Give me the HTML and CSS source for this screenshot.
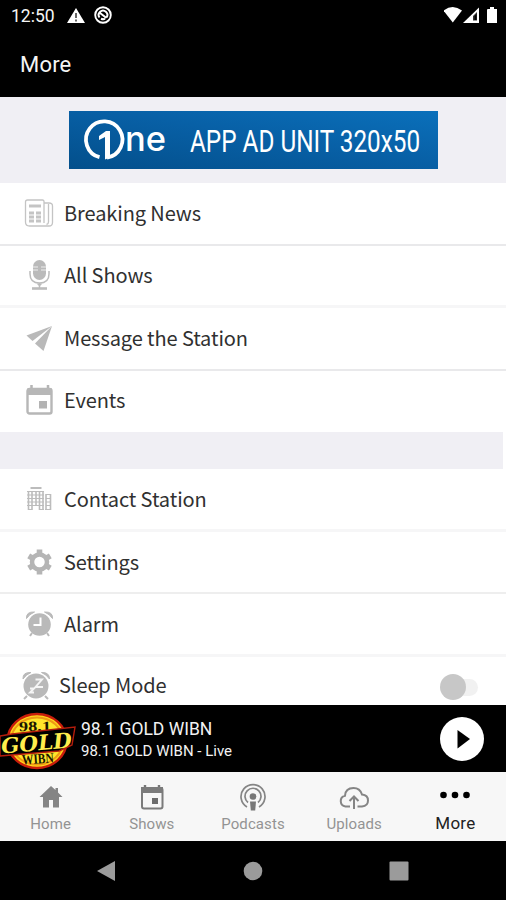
FILE: index.html
```html
<!DOCTYPE html>
<html lang="en">
<head>
    <meta charset="UTF-8">
    <meta name="viewport" content="width=device-width, initial-scale=1.0">
    <title>More</title>
    <link rel="stylesheet" href="styles.css">
</head>
<body>
    <div class="status-bar">
        <span class="clock">12:50</span>
        <svg class="warn" width="18" height="16" viewBox="0 0 18 16">
            <path d="M9 0L18 15H0z" fill="#fff"/>
            <path d="M9 5v5M9 11.5v2" stroke="#666" stroke-width="2"/>
        </svg>
        <svg class="dnd" width="18" height="18" viewBox="0 0 18 18" fill="none" stroke="#fff">
            <circle cx="9" cy="9" r="7.8" stroke-width="1.9"/>
            <path d="M5.5 11.5A4.3 4.3 0 1 1 12.5 11.5M6 7l6.500 5M7 12.7q2.5 1 4 0" stroke-width="2"/>
        </svg>
        <svg class="signals" width="56" height="18" viewBox="0 0 56 18">
            <path d="M-.5 4.500Q8.800-2.500 18 4.500L8.800 16.500z" fill="#fff"/>
            <path d="M35 1.500V17H19z" fill="#fff"/>
            <path d="M33 6v8.500h-4V10z" fill="#333"/>
            <path d="M32.500 8v6h-2v-4z" fill="#000"/>
            <path d="M43.500 3h2.500V1h4v2h3v14h-10V4z" fill="#fff"/>
        </svg>
    </div>
    <header class="app-header">More</header>

    <div class="ad-wrap">
        <svg class="ad" width="369" height="58" viewBox="0 0 369 58">
            <defs>
                <linearGradient id="adFill" x1="0" y1="1" x2="1" y2="0">
                    <stop offset="0" stop-color="#034f8b"/>
                    <stop offset=".55" stop-color="#0860a6"/>
                    <stop offset="1" stop-color="#0a70bb"/>
                </linearGradient>
            </defs>
            <rect width="369" height="58" fill="url(#adFill)"/>
            <path d="M30.500 46.200A18.200 18.200 0 1 1 38 46.600" fill="none" stroke="#fff" stroke-width="3.800"/>
            <path d="M30 29v-4l7-5H41v26.500l-5 2V26z" fill="#fff"/>
            <text x="56" y="39.500" class="ad-brand" textLength="41" lengthAdjust="spacingAndGlyphs">ne</text>
            <g transform="translate(121 0) scale(.84 1)">
                <text x="0" y="41" class="ad-text" textLength="274" lengthAdjust="spacingAndGlyphs">APP AD UNIT 320x50</text>
            </g>
        </svg>
    </div>

    <main class="menu">
        <div class="row line">
            <svg width="30" height="30" viewBox="0 0 30 30" fill="none" stroke="#c4c4c4" stroke-width="1.300">
                <path d="M20 25V3.500Q20 2 18.500 2H3.500Q1.500 2 1.500 4v20q0 4 4 4H25q3.500 0 3.500-3.500V8Q28.500 5 25 5h-5M24.500 6v18q0 2-2 2.500"/>
                <path d="M5 8h12" stroke-width="3"/>
                <path d="M5 15h5M12 15h5M5 19h5M12 19h5M5 23h5M12 23h5" stroke-width="2.800"/>
            </svg>
            <span>Breaking News</span>
        </div>
        <div class="row soft">
            <svg width="30" height="30" viewBox="0 0 30 30">
                <rect x="9" y="0" width="13" height="20" rx="6.500" fill="#bababa"/>
                <path d="M9 7h5M17 7h5M9 10h5M17 10h5" stroke="#eee" stroke-width="1.100"/>
                <path d="M6 11v3q0 9 9.500 9t9.500-9v-3M15.500 23v5" fill="none" stroke="#bcbcbc" stroke-width="1.500"/>
                <path d="M12.500 23.500h6l-3 3z" fill="#bcbcbc"/>
                <path d="M8 28.500h15" stroke="#bcbcbc" stroke-width="2.600"/>
            </svg>
            <span>All Shows</span>
        </div>
        <div class="row line">
            <svg width="30" height="30" viewBox="0 0 30 30" fill="#b9b9b9">
                <path d="M2.500 12.500L28 3 8.500 18z"/>
                <path d="M28 3L19.500 28 11 20.500z"/>
            </svg>
            <span>Message the Station</span>
        </div>
        <div class="row last">
            <svg width="30" height="30" viewBox="0 0 30 30">
                <path d="M7.500 0v5M24 0v5" stroke="#b5b5b5" stroke-width="2.500"/>
                <rect x="3.500" y="4" width="24" height="24.500" rx="2" fill="none" stroke="#b7b7b7" stroke-width="2.400"/>
                <path d="M3 3.500h25V10H3z" fill="#b7b7b7"/>
                <path d="M15 16h8v7.500h-8z" fill="#b3b3b3"/>
            </svg>
            <span>Events</span>
        </div>
        <div class="divider"></div>
        <div class="row soft">
            <svg width="30" height="30" viewBox="0 0 30 30" fill="none" stroke="#bcbcbc">
                <path d="M6.500 4h11" stroke-width="2"/>
                <path d="M3 7.500h17M3 11h17M3 14.500h17M3 18h17M3 21.500h17M4 25.500h4M15 25.500h5M22 10.500h5M22 14.500h5M22 18h5M22 21.500h5M21 25.500h6" stroke-width="1.200"/>
                <path d="M4.500 7v19M8 7v19M12 7v15M15.500 7v19M19 7v19M22 10v16M26.500 10v16" stroke-width="1.600"/>
            </svg>
            <span>Contact Station</span>
        </div>
        <div class="row line-soft">
            <svg width="30" height="30" viewBox="0 0 30 30">
                <circle cx="15.500" cy="15" r="7.500" fill="none" stroke="#b5b5b5" stroke-width="4.500"/>
                <path d="M15.500 2.500v4M15.500 23.500v4M4.700 8.800l3.400 2M22.900 19.200l3.400 2M4.700 21.200l3.400-2M22.900 10.800l3.400-2" stroke="#b5b5b5" stroke-width="5.600"/>
            </svg>
            <span>Settings</span>
        </div>
        <div class="row soft">
            <svg width="30" height="30" viewBox="0 0 30 30">
                <circle cx="15.500" cy="15.500" r="11.300" fill="#b9b9b9"/>
                <path d="M2.500 9.500Q2 2.500 10.500 3Q5.500 5 2.500 9.500M20.500 3q8.500-.5 8 6.500-3-4.500-8-6.500" fill="#b9b9b9" stroke="#b9b9b9" stroke-width="1"/>
                <path d="M8 24l-2 3M23 24l2 3" stroke="#b9b9b9" stroke-width="2"/>
                <path d="M16.500 8.500V16H9.500" fill="none" stroke="#fff" stroke-width="2"/>
            </svg>
            <span>Alarm</span>
        </div>
        <div class="row sleep">
            <svg width="30" height="30" viewBox="0 0 30 30">
                <circle cx="15" cy="16" r="12.500" fill="#b9b9b9"/>
                <path d="M2 9Q1.500 2 10 2.500Q5 4.500 2 9M20.500 2.500q8-.5 8 6.500-3-4.500-8-6.500" fill="#b9b9b9" stroke="#b9b9b9" stroke-width="1"/>
                <path d="M6 26l-3 3M24 26l3 3" stroke="#b9b9b9" stroke-width="2"/>
                <path d="M14.500 9.500h6.500l-6.500 7.500H22M9 18.500h4l-4 4h4" fill="none" stroke="#f5f5f5" stroke-width="1.900"/>
            </svg>
            <span>Sleep Mode</span>
            <div class="toggle"><i class="knob"></i></div>
        </div>
    </main>

    <div class="player">
        <svg class="logo" width="76" height="66" viewBox="0 0 76 66">
            <ellipse cx="37" cy="35" rx="29.500" ry="27" fill="#ffd51c" stroke="#c91d0b" stroke-width="2.500"/>
            <ellipse cx="37" cy="35" rx="26" ry="23.500" fill="#ffe52b" stroke="#ee9a13" stroke-width="2"/>
            <text x="19" y="25" class="logo-small" textLength="32" lengthAdjust="spacingAndGlyphs" transform="rotate(-1 35 22)">98.1</text>
            <path d="M0 30l12-2 63-7-3 18-13 6-59 5z" fill="#000" stroke="#b41c0c" stroke-width="1.400"/>
            <text x="1" y="44.500" class="logo-gold" textLength="71" lengthAdjust="spacingAndGlyphs" transform="rotate(-5 36 38)">GOLD</text>
            <text x="22" y="57.500" class="logo-small" textLength="32" lengthAdjust="spacingAndGlyphs" transform="rotate(-4 38 56)">WIBN</text>
        </svg>
        <div class="track">
            <div class="title">98.1 GOLD WIBN</div>
            <div class="subtitle">98.1 GOLD WIBN - Live</div>
        </div>
        <svg class="play" width="44" height="44" viewBox="0 0 44 44">
            <circle cx="22" cy="22" r="22" fill="#fff"/>
            <path d="M17.500 13v18.500L30 22z" fill="#000"/>
        </svg>
    </div>

    <nav class="tabs">
        <div class="tab">
            <svg width="30" height="28" viewBox="0 0 30 28" fill="#858585">
                <path d="M15 3L3.500 14H7v10.500h6V17h4v7.500h6V14h3.500L22 9.500V5h-2.500v2z"/>
            </svg>
            <span>Home</span>
        </div>
        <div class="tab">
            <svg width="30" height="28" viewBox="0 0 30 28">
                <path d="M8 2v4M22 2v4" stroke="#777" stroke-width="2.400"/>
                <rect x="5" y="5" width="20.500" height="20.500" rx="2" fill="none" stroke="#7b7b7b" stroke-width="2"/>
                <path d="M4 4h22v6H4z" fill="#7b7b7b"/>
                <path d="M15 15h6v6h-6z" fill="#6c6c6c"/>
            </svg>
            <span>Shows</span>
        </div>
        <div class="tab">
            <svg width="30" height="28" viewBox="0 0 30 28" fill="none" stroke="#858585" stroke-width="1.700">
                <path d="M9 24A12 12 0 1 1 21 24M10 19.500A8 8 0 1 1 20 19.500"/>
                <circle cx="15" cy="13.500" r="3.300" fill="#777" stroke="none"/>
                <path d="M12 18.500h6l-.8 9h-4.400z" fill="#777" stroke="none"/>
            </svg>
            <span>Podcasts</span>
        </div>
        <div class="tab">
            <svg width="30" height="28" viewBox="0 0 30 28" fill="none" stroke="#858585" stroke-width="2">
                <path d="M11 23.500H6.500A5.500 5.500 0 0 1 6 12.700Q6.500 5 14.500 5q6.500 0 8.500 6.500 6 .5 6 6t-6 6h-4.500M15 26V14M10.500 18L15 13.500l4.500 4.500"/>
            </svg>
            <span>Uploads</span>
        </div>
        <div class="tab active">
            <svg width="30" height="28" viewBox="0 0 30 28">
                <circle cx="3.500" cy="12" r="3.300"/>
                <circle cx="15" cy="12" r="3.300"/>
                <circle cx="26.500" cy="12" r="3.300"/>
            </svg>
            <span>More</span>
        </div>
    </nav>

    <div class="system-nav">
        <svg width="20" height="22" viewBox="0 0 20 22"><path d="M1 11L19 1v20z" fill="#9b9b9b"/></svg>
        <svg width="20" height="20" viewBox="0 0 20 20"><circle cx="10" cy="10" r="9.300" fill="#9b9b9b"/></svg>
        <svg width="20" height="20" viewBox="0 0 20 20"><rect x=".5" y=".5" width="19" height="19" rx="1" fill="#9b9b9b"/></svg>
    </div>
</body>
</html>
```
FILE: styles.css
```css
* {
    box-sizing: border-box;
}

body {
    margin: 0;
    width: 506px;
    height: 900px;
    overflow: hidden;
    background-color: #000;
    font-family: Roboto, "Liberation Sans", sans-serif;
}

svg {
    display: block;
    flex: none;
}

/* Top bars */
.status-bar {
    display: flex;
    height: 32px;
    padding: 6px 6px 0 11px;
    color: #f5f5f5;
}

.clock {
    width: 56px;
    font-size: 17.5px;
    line-height: 20px;
    white-space: nowrap;
}

.warn {
    margin-top: 2px;
}

.dnd {
    margin-left: 9px;
}

.signals {
    margin-left: auto;
}

.app-header {
    height: 65px;
    padding: 20px 20px 0;
    color: #f5f5f5;
    font-size: 22px;
    line-height: 26px;
    letter-spacing: 0.2px;
}

/* Banner */
.ad-wrap {
    display: flex;
    justify-content: center;
    height: 86px;
    padding-top: 14px;
    background-color: #f0eff4;
}

.ad-brand {
    font: 500 34px Inter, sans-serif;
    fill: #fff;
}

.ad-text {
    font: 31px Roboto, sans-serif;
    fill: #fff;
}

/* Menu list */
.menu {
    height: 522px;
    background-color: #fff;
    overflow: hidden;
}

.row {
    display: flex;
    align-items: center;
    height: 62.5px;
    padding-left: 24px;
    border-bottom: 2px solid #fff;
    color: #303030;
    font: 20px/30px "Noto Sans CJK SC", "Noto Sans", sans-serif;
    letter-spacing: -0.1px;
}

.row span {
    margin-left: 10px;
    white-space: nowrap;
}

.line {
    border-bottom-color: #e9e9eb;
}

.line-soft {
    border-bottom-color: #eee;
}

.soft {
    border-bottom: 3px solid #f6f6f7;
}

.last {
    height: 61.5px;
}

.divider {
    width: 503px;
    height: 37px;
    background-color: #f0eff4;
}

.sleep {
    height: 60px;
    padding: 0 28px 4px 21px;
    border: none;
}

.sleep span {
    margin-left: 8px;
}

.toggle {
    display: flex;
    align-items: center;
    width: 37px;
    height: 17px;
    margin: 5px 0 0 auto;
    border-radius: 9px;
    background-color: #f1f1f1;
}

.knob {
    width: 26px;
    height: 26px;
    margin-left: -1px;
    border-radius: 50%;
    background-color: #c7c7c7;
}

/* Player */
.player {
    display: flex;
    align-items: center;
    height: 67px;
    padding-right: 22px;
    background-color: #000;
    color: #f2f2f2;
}

.logo-small {
    font: bold 14px "Liberation Serif", serif;
    fill: #191500;
}

.logo-gold {
    font: italic 900 21px "DejaVu Serif", serif;
    fill: #ffed4d;
}

.track {
    margin-left: 5px;
    padding-top: 2px;
    white-space: nowrap;
}

.title {
    font-size: 17.5px;
    line-height: 23px;
}

.subtitle {
    font-size: 15px;
    line-height: 20px;
}

.play {
    margin-left: auto;
}

/* Bottom tabs */
.tabs {
    display: flex;
    height: 69px;
    background-color: #f7f7f7;
}

.tab {
    display: flex;
    flex: 1;
    flex-direction: column;
    align-items: center;
    padding-top: 11px;
    color: #939393;
    font-size: 15px;
    line-height: 20px;
    letter-spacing: 0.1px;
}

.tab span {
    margin-top: 3px;
}

.active {
    color: #222;
    font-size: 17px;
    letter-spacing: 0.3px;
}

.active span {
    margin-top: 2px;
}

.system-nav {
    display: flex;
    justify-content: space-between;
    align-items: center;
    height: 59px;
    padding: 0 97px 0 96px;
}
```
